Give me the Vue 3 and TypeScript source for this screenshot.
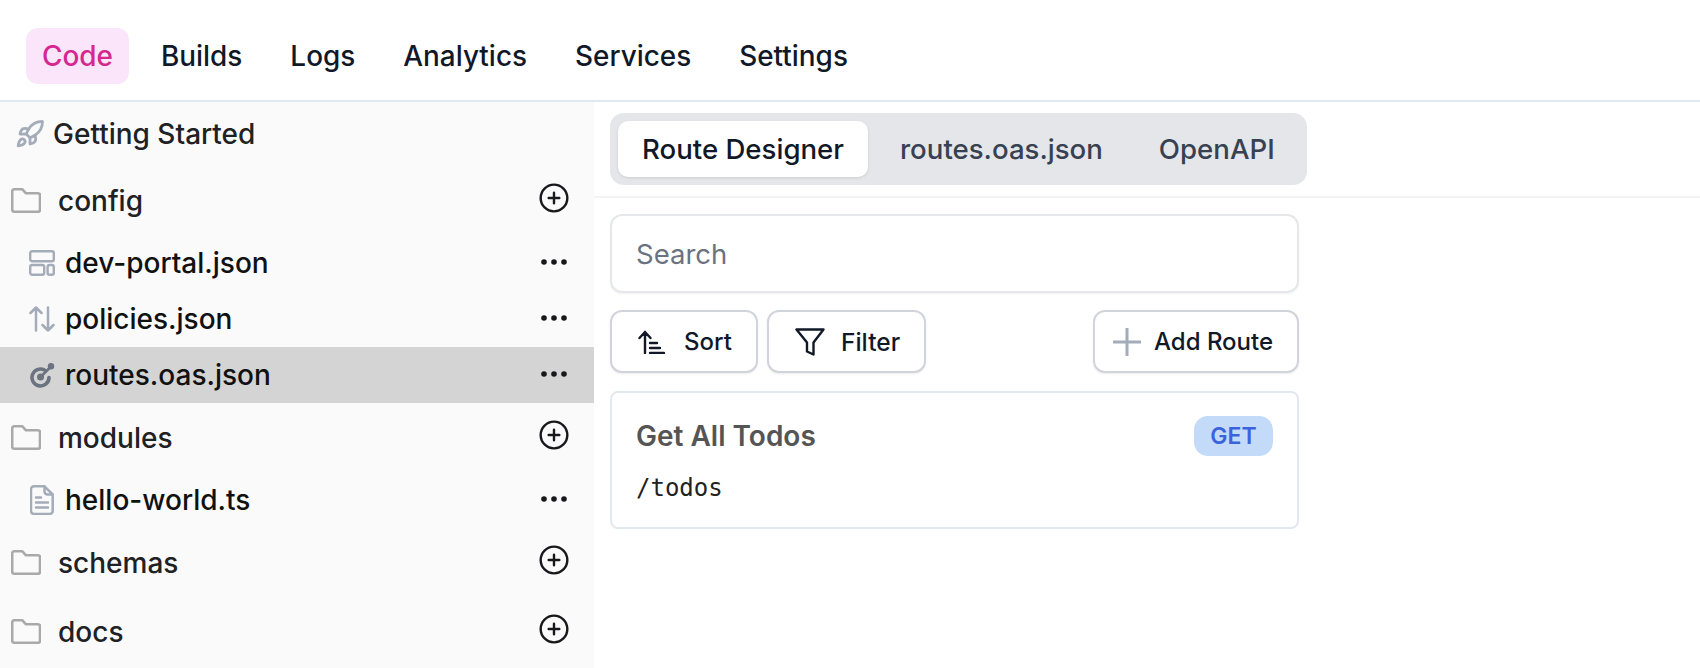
<script setup lang="ts">
const navItems: string[] = ['Code', 'Builds', 'Logs', 'Analytics', 'Services', 'Settings']
type Row =
  | { kind: 'folder'; name: string }
  | { kind: 'file'; name: string; icon: string; active?: boolean }
const rows: Row[] = [
  { kind: 'folder', name: 'config' },
  { kind: 'file', name: 'dev-portal.json', icon: 'layout' },
  { kind: 'file', name: 'policies.json', icon: 'arrows' },
  { kind: 'file', name: 'routes.oas.json', icon: 'gauge', active: true },
  { kind: 'folder', name: 'modules' },
  { kind: 'file', name: 'hello-world.ts', icon: 'doc' },
  { kind: 'folder', name: 'schemas' },
  { kind: 'folder', name: 'docs' }
]
const tabs: string[] = ['Route Designer', 'routes.oas.json', 'OpenAPI']
</script>

<template>
  <div class="page">
    <nav class="nav">
      <a v-for="(item, i) in navItems" :key="item" class="nav-item" :class="{ on: i === 0 }">{{ item }}</a>
    </nav>
    <div class="body">
      <aside class="side">
        <div class="start">
          <svg class="rocket" viewBox="0 0 24 24" fill="none" stroke="currentColor" stroke-width="2.200" stroke-linecap="round" stroke-linejoin="round">
            <path d="M4.5 16.5c-1.5 1.26-2 5-2 5s3.74-.5 5-2c.71-.84.7-2.13-.09-2.91a2.18 2.18 0 0 0-2.91-.09z" />
            <path d="m12 15-3-3a22 22 0 0 1 2-3.95A12.88 12.88 0 0 1 22 2c0 2.72-.78 7.5-6 11a22.35 22.35 0 0 1-4 2z" />
            <path d="M9 12H4s.55-3.03 2-4c1.62-1.08 5 0 5 0" />
            <path d="M12 15v5s3.03-.55 4-2c1.08-1.62 0-5 0-5" />
          </svg>
          <span>Getting Started</span>
        </div>
        <template v-for="row in rows" :key="row.name">
          <div v-if="row.kind === 'folder'" class="folder">
            <svg class="folder-icon" viewBox="0 0 30 25" fill="none" stroke="currentColor" stroke-width="2.600" stroke-linejoin="round">
              <path d="M3.2 1.300h8.200l3.600 4h12a2 2 0 0 1 2 2v14.400a2 2 0 0 1-2 2H3.200a2 2 0 0 1-2-2V3.300a2 2 0 0 1 2-2z" />
            </svg>
            <span class="folder-name">{{ row.name }}</span>
            <svg class="plus" viewBox="0 0 24 24" fill="none" stroke="currentColor" stroke-width="1.800" stroke-linecap="round">
              <circle cx="12" cy="12" r="10" />
              <path d="M8 12h8M12 8v8" />
            </svg>
          </div>
          <div v-else class="file" :class="{ active: row.active }">
            <span class="file-icon">
              <svg v-if="row.icon === 'layout'" viewBox="0 0 26 26" fill="none" stroke="currentColor" stroke-width="2.400">
                <rect x="1.200" y="1.200" width="23.600" height="10" rx="2" />
                <rect x="1.200" y="15" width="14" height="9.800" rx="2" />
                <rect x="18.600" y="15" width="6.200" height="9.800" rx="2" />
              </svg>
              <svg v-else-if="row.icon === 'arrows'" viewBox="0 0 26 26" fill="none" stroke="currentColor" stroke-width="2.500" stroke-linecap="round" stroke-linejoin="round">
                <path d="M7 24.500V1.500M1.500 7 7 1.500 12.500 7M19 1.500v23M13.500 19l5.500 5.500 5.500-5.500" />
              </svg>
              <svg v-else-if="row.icon === 'gauge'" class="gauge" viewBox="0 0 26 26" fill="none" stroke="currentColor" stroke-width="3.600" stroke-linecap="round">
                <path d="M15.500 8A8.500 8.500 0 1 0 20 15.500" />
                <path d="M11.500 15 22 4.500" stroke-width="2.600" />
                <circle cx="11.500" cy="15" r="3.500" fill="currentColor" stroke="none" />
                <circle cx="22" cy="4.300" r="3.200" fill="currentColor" stroke="none" />
              </svg>
              <svg v-else class="doc" viewBox="0 0 24 30" fill="none" stroke="currentColor" stroke-width="2.500" stroke-linecap="round" stroke-linejoin="round">
                <path d="M4 1.300h10.500l8.200 8.200V26a3 3 0 0 1-3 3H4a3 3 0 0 1-3-3V4.300a3 3 0 0 1 3-3z" />
                <path d="M14.500 1.500v5a3 3 0 0 0 3 3h5M6 12.500h5M6 17.500h12M6 22.500h12" />
              </svg>
            </span>
            <span class="file-name">{{ row.name }}</span>
            <svg class="dots" viewBox="0 0 26 6" fill="currentColor">
              <circle cx="3" cy="3" r="2.800" />
              <circle cx="13" cy="3" r="2.800" />
              <circle cx="23" cy="3" r="2.800" />
            </svg>
          </div>
        </template>
      </aside>
      <main class="main">
        <div class="tabbar">
          <div class="tabs">
            <button v-for="(tab, i) in tabs" :key="tab" class="tab" :class="{ current: i === 0 }">{{ tab }}</button>
          </div>
        </div>
        <div class="content">
          <div class="search">Search</div>
          <div class="tools">
            <button class="btn sort">
              <svg class="sort-icon" viewBox="0 0 27 24" fill="none" stroke="currentColor" stroke-width="2.400" stroke-linecap="round" stroke-linejoin="round">
                <path d="M7 23V2M1.500 8 7 2l5.500 6M12 13h7M12 18h10M12 23h14" />
              </svg>
              <span>Sort</span>
            </button>
            <button class="btn filter">
              <svg class="filter-icon" viewBox="0 0 30 28" fill="none" stroke="currentColor" stroke-width="2.400" stroke-linejoin="round">
                <path d="M1.500 1.500h27L18.500 14.500V26.500l-6.500-3V14.500z" />
              </svg>
              <span>Filter</span>
            </button>
            <button class="btn add">
              <svg class="add-icon" viewBox="0 0 28 28" fill="none" stroke="currentColor" stroke-width="3">
                <path d="M14 0v28M0 14h28" />
              </svg>
              <span>Add Route</span>
            </button>
          </div>
          <article class="card">
            <div class="card-top">
              <h3>Get All Todos</h3>
              <span class="badge">GET</span>
            </div>
            <code class="path">/todos</code>
          </article>
        </div>
      </main>
    </div>
  </div>
</template>

<style>
html, body { margin: 0; background: #fff; overflow: hidden; }
</style>

<style scoped>
.page {
  width: 1700px;
  height: 668px;
  overflow: hidden;
  display: flex;
  flex-direction: column;
  font-family: Inter, "Noto Sans", sans-serif;
  font-weight: 500;
  background: #fff;
}
.nav {
  flex: none;
  box-sizing: border-box;
  height: 102px;
  border-bottom: 2px solid #e2e8f0;
  display: flex;
  align-items: flex-start;
  gap: 16px;
  padding: 28px 0 0 26px;
}
.nav-item {
  height: 56px;
  padding: 0 16px;
  border-radius: 12px;
  display: flex;
  align-items: center;
  font-size: 27.900px;
  color: #111827;
}
.nav-item.on {
  background: #fae5fa;
  color: #d6278f;
}
.body { flex: 1; display: flex; min-height: 0; }
.side {
  width: 594px;
  flex: none;
  background: #fafafa;
  font-size: 28px;
  color: #202124;
}
.start {
  height: 64px;
  display: flex;
  align-items: center;
  gap: 8px;
  padding-left: 15px;
}
.rocket { width: 30px; height: 30px; color: #a4abb9; }
.folder {
  height: 69px;
  display: flex;
  align-items: center;
  padding: 0 24px 0 11px;
}
.folder-icon { width: 30px; height: 25px; color: #a9a9a9; flex: none; }
.folder-name { margin-left: 17px; flex: 1; }
.plus { width: 32px; height: 32px; color: #18181b; margin-top: -6px; }
.file {
  height: 56px;
  display: flex;
  align-items: center;
  padding: 0 27px 0 29px;
  color: #111;
}
.file.active { background: #d4d4d4; }
.file-icon { width: 26px; height: 26px; color: #a4abb9; flex: none; display: flex; align-items: center; justify-content: center; }
.file-icon svg { width: 26px; height: 26px; }
.file-icon .gauge { color: #6b7280; }
.file-icon .doc { width: 24px; height: 30px; flex: none; }
.file-name { margin-left: 10px; flex: 1; }
.dots { width: 26px; height: 6px; color: #18181b; margin-top: -2px; }
.main { flex: 1; min-width: 0; }
.tabbar {
  height: 96px;
  box-sizing: border-box;
  padding: 11px 0 0 16px;
  border-bottom: 2px solid #f1f3f5;
}
.tabs {
  display: inline-flex;
  gap: 8px;
  height: 72px;
  box-sizing: border-box;
  padding: 8px;
  background: #e4e6ea;
  border-radius: 14px;
}
.tab {
  height: 56px;
  border: 0;
  padding: 0 24px;
  background: transparent;
  border-radius: 10px;
  font: inherit;
  font-size: 27.600px;
  color: #374151;
}
.tab.current {
  background: #fff;
  color: #111827;
  box-shadow: 0 1px 3px rgba(0, 0, 0, 0.1);
}
.content {
  width: 689px;
  margin-left: 16px;
  padding-top: 16px;
}
.search {
  height: 79px;
  box-sizing: border-box;
  border: 2px solid #e5e7eb;
  border-radius: 12px;
  box-shadow: 0 1px 2px rgba(0, 0, 0, 0.06);
  display: flex;
  align-items: center;
  padding-left: 24px;
  font-size: 27.500px;
  font-weight: 400;
  color: #6b7280;
}
.tools {
  display: flex;
  gap: 9px;
  margin-top: 17px;
}
.btn {
  height: 63px;
  box-sizing: border-box;
  border: 2px solid #d1d5db;
  border-radius: 12px;
  background: #fff;
  box-shadow: 0 1px 2px rgba(0, 0, 0, 0.08);
  display: flex;
  align-items: center;
  font: inherit;
  font-size: 24px;
  color: #111827;
}
.sort { width: 148px; padding: 0 0 0 26px; gap: 19px; }
.filter { width: 159px; padding: 0 0 0 26px; gap: 16px; font-size: 24.500px; }
.add { width: 206px; margin-left: auto; padding: 0 0 0 18px; gap: 13px; }
.sort-icon { width: 27px; height: 24px; flex: none; }
.filter-icon { width: 30px; height: 28px; flex: none; }
.add-icon { width: 28px; height: 28px; color: #a4abb9; flex: none; }
.card {
  margin-top: 18px;
  height: 138px;
  box-sizing: border-box;
  border: 2px solid #e2e8f0;
  border-radius: 8px;
  padding: 23px 24px 0 24px;
}
.card-top { display: flex; align-items: center; justify-content: space-between; }
.card-top h3 {
  margin: 0;
  font-size: 28px;
  font-weight: 600;
  color: #555;
}
.badge {
  width: 79px;
  height: 40px;
  border-radius: 14px;
  background: #c3daf9;
  color: #3b63dd;
  display: flex;
  align-items: center;
  justify-content: center;
  font-size: 23px;
  font-weight: 600;
}
.path {
  display: block;
  margin-top: 18px;
  font-family: "DejaVu Sans Mono", monospace;
  font-size: 24px;
  font-weight: 400;
  color: #222;
}
</style>
